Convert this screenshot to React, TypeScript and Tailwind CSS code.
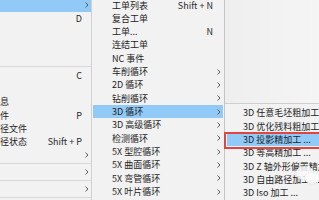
import React from "react";

type Item = {
  label?: string;
  shortcut?: string;
  arrow?: boolean;
  active?: boolean;
};

const font = { fontFamily: '"Noto Sans CJK SC", "Noto Sans", sans-serif' };

function Chevron() {
  return (
    <svg width="4" height="6" viewBox="0 0 4 6" className="block">
      <path d="M0.5 0.5 L3 3 L0.5 5.5" fill="none" stroke="#5a5a5a" strokeWidth="1" />
    </svg>
  );
}

function Sep() {
  return (
    <div className="h-[3.5px] flex items-center">
      <div className="h-px w-full bg-[#d9d9d9]" />
    </div>
  );
}

const leftItems: (Item | "sep")[] = [
  { arrow: true, active: true },
  { shortcut: "D" },
  {},
  {},
  {},
  "sep",
  { shortcut: "C" },
  {},
  { label: "息" },
  { label: "件", shortcut: "P" },
  { label: "径文件" },
  { label: "径状态", shortcut: "Shift + P" },
  { arrow: true },
  "sep",
  { arrow: true },
  "sep",
  { arrow: true },
  "sep",
];

const midItems: Item[] = [
  { label: "工单列表", shortcut: "Shift + N" },
  { label: "复合工单" },
  { label: "工单...", shortcut: "N" },
  { label: "连结工单" },
  { label: "NC 事件" },
  { label: "车削循环", arrow: true },
  { label: "2D 循环", arrow: true },
  { label: "钻削循环", arrow: true },
  { label: "3D 循环", arrow: true, active: true },
  { label: "3D 高级循环", arrow: true },
  { label: "检测循环", arrow: true },
  { label: "5X 型腔循环", arrow: true },
  { label: "5X 曲面循环", arrow: true },
  { label: "5X 弯管循环", arrow: true },
  { label: "5X 叶片循环", arrow: true },
];

const subItems: Item[] = [
  { label: "3D 任意毛坯粗加工 ..." },
  { label: "3D 优化残料粗加工 ..." },
  { label: "3D 投影精加工 ...", active: true },
  { label: "3D 等高精加工 ..." },
  { label: "3D Z 轴外形偏置精加工 ..." },
  { label: "3D 自由路径加工 ..." },
  { label: "3D Iso 加工 ..." },
];

export default function App() {
  return (
    <div
      className="relative flex h-[200px] w-[319px] overflow-hidden bg-[#f4f4f4] text-[9px] leading-none text-[#1e1e1e]"
      style={font}
    >
      {/* left (parent) menu, its labels run off the screen edge */}
      <div className="w-[92px] shrink-0 overflow-hidden border-r border-[#d0d0d0] bg-[#f2f2f2]">
        <div className="-mt-[1.67px]">
          {leftItems.map((it, i) =>
            it === "sep" ? (
              <Sep key={i} />
            ) : (
              <div
                key={i}
                className={
                  "flex h-[13.33px] items-center whitespace-nowrap " +
                  (it.active ? "bg-[#91c9f7]" : "")
                }
              >
                <span className="flex-1">{it.label}</span>
                <span className="text-[#2a2a2a]">{it.shortcut}</span>
                <div className="flex w-[9px] justify-end pr-[2px]">{it.arrow && <Chevron />}</div>
              </div>
            )
          )}
        </div>
      </div>

      {/* middle menu */}
      <div className="w-[133px] shrink-0 border-r border-[#c4c4c4] bg-[#f2f2f2]">
        <div className="-mt-[1.67px]">
          {midItems.map((it, i) => (
            <div
              key={i}
              className={
                "mx-[1px] flex h-[13.33px] items-center whitespace-nowrap pl-[19px] " +
                (it.active ? "bg-[#91c9f7]" : "")
              }
            >
              <span className="flex-1">{it.label}</span>
              <span className="text-[#2a2a2a]">{it.shortcut}</span>
              <div className="flex w-[10px] justify-center pl-[2px]">{it.arrow && <Chevron />}</div>
            </div>
          ))}
        </div>
      </div>

      {/* right side: background + sub-menu */}
      <div className="flex flex-1 flex-col">
        <div className="h-[103px] shrink-0 bg-gradient-to-r from-[#eeeeee] to-[#f7f7f7]" />
        <div className="relative flex-1 border-t border-[#cfcfcf] bg-[#f2f2f2] pt-[2.3px]">
          {subItems.map((it, i) => (
            <div
              key={i}
              className={
                "ml-[2px] flex h-[13.33px] items-center whitespace-nowrap pl-[16px] " +
                (it.active ? "bg-[#91c9f7]" : "")
              }
            >
              {it.label}
            </div>
          ))}
          {/* red annotation box */}
          <div className="absolute left-[-1px] top-[27.6px] h-[17.3px] w-[110px] border-2 border-[#e0453f]" />
          {/* faint watermark */}
          <svg
            className="absolute left-[70px] top-[60px]"
            width="26"
            height="22"
            viewBox="0 0 26 22"
          >
            <ellipse cx="10" cy="9" rx="9" ry="7" fill="#fafafa" fillOpacity="0.85" stroke="#c8c8c8" strokeWidth="0.6" strokeDasharray="1 1.5" />
            <ellipse cx="17" cy="14" rx="7.5" ry="6" fill="#fbfbfb" fillOpacity="0.9" stroke="#c8c8c8" strokeWidth="0.6" strokeDasharray="1 1.5" />
          </svg>
        </div>
      </div>
    </div>
  );
}
